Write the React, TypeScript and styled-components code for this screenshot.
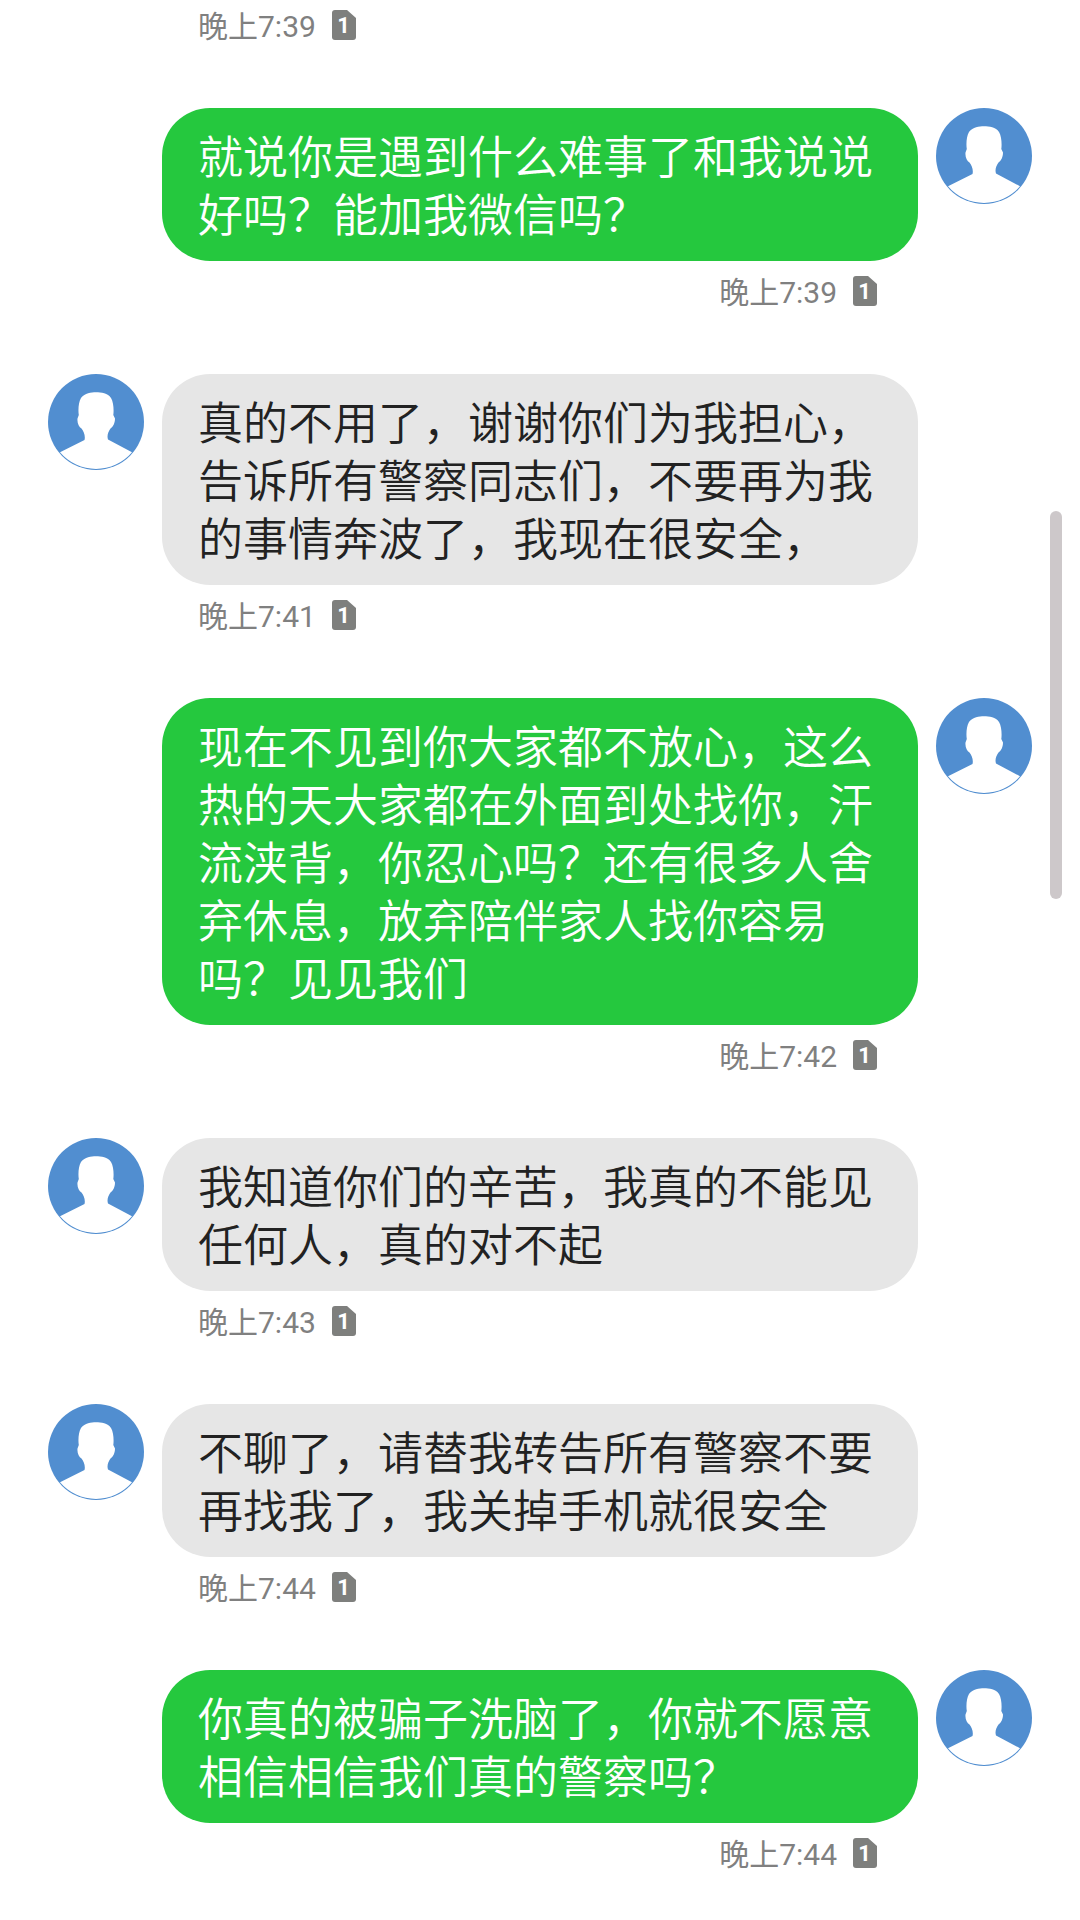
import React from 'react';
import styled, { createGlobalStyle } from 'styled-components';

const GlobalStyle = createGlobalStyle`
  html, body {
    margin: 0;
    padding: 0;
    background: #fff;
    overflow: hidden;
  }
  * {
    box-sizing: border-box;
  }
`;

const Page = styled.div`
  position: relative;
  width: 1080px;
  height: 1920px;
  overflow: hidden;
  padding-top: 7px;
  background: #fff;
  font-family: Roboto, 'Noto Sans CJK SC', sans-serif;
`;

const MessageList = styled.div`
  display: flex;
  flex-direction: column;
  gap: 65px;
`;

const Row = styled.div`
  display: grid;
  grid-template-columns: 96px 756px 96px;
  column-gap: 18px;
  padding: 0 48px;
`;

const AvatarSlot = styled.div<{ $outgoing: boolean }>`
  grid-column: ${(p) => (p.$outgoing ? 3 : 1)};
  grid-row: 1;
  width: 96px;
  height: 96px;
`;

const Body = styled.div`
  grid-column: 2;
  grid-row: 1;
  display: flex;
  flex-direction: column;
  gap: 12px;
`;

const Bubble = styled.div<{ $outgoing: boolean }>`
  padding: 18px 37px 19px 36px;
  border-radius: 48px;
  font-family: 'Noto Sans CJK SC DemiLight', 'Noto Sans CJK SC', sans-serif;
  font-size: 45px;
  line-height: 58px;
  font-weight: 400;
  color: ${(p) => (p.$outgoing ? '#fff' : '#222')};
  background: ${(p) => (p.$outgoing ? '#25c83e' : '#e6e6e6')};
`;

const Meta = styled.div<{ $outgoing: boolean }>`
  display: flex;
  align-items: center;
  justify-content: ${(p) => (p.$outgoing ? 'flex-end' : 'flex-start')};
  gap: 16px;
  height: 36px;
  padding: ${(p) => (p.$outgoing ? '0 41px 0 0' : '0 0 0 36px')};
  font-size: 30px;
  color: #808080;
`;

const MetaTime = styled.span`
  padding-bottom: 2px;
`;

const Scrollbar = styled.div`
  position: absolute;
  top: 511px;
  left: 1050px;
  width: 12px;
  height: 388px;
  border-radius: 6px;
  background: #cdc8ca;
`;

const Avatar = () => (
  <svg width="96" height="96" viewBox="0 0 96 96">
    <circle cx="48" cy="48" r="48" fill="#518ed0" />
    <path
      fill="#fff"
      d="M12 78.2 L36.5 66 C37.5 62 36 58 33.5 54.5 C31 53 29 49 29.5 44.5 L30.8 41 C30 36 30.5 28 33 24 C37 19 43 18.3 48 18.3 C53 18.3 60 19 63 24 C65.5 28 66 36 65.3 41 L67 44.5 C67 49 65 53 62.5 54.5 C60 58 58.8 62 60 65.5 L84 78.2 A47 47 0 0 1 12 78.2 Z"
    />
  </svg>
);

const ReadMark = () => (
  <svg width="24" height="30" viewBox="0 0 24 30">
    <path
      fill="#7e7f7d"
      d="M3 0 H15 L24 8 V27 Q24 30 21 30 H3 Q0 30 0 27 V3 Q0 0 3 0 Z"
    />
    <text
      x="11.5"
      y="23"
      fill="#fff"
      fontFamily="Roboto, sans-serif"
      fontSize="22"
      fontWeight="700"
      textAnchor="middle"
    >
      1
    </text>
  </svg>
);

interface ChatMessage {
  text: string;
  time: string;
  outgoing: boolean;
}

const messages: ChatMessage[] = [
  {
    text: '就说你是遇到什么难事了和我说说好吗？能加我微信吗？',
    time: '晚上7:39',
    outgoing: true,
  },
  {
    text: '真的不用了，谢谢你们为我担心，告诉所有警察同志们，不要再为我的事情奔波了，我现在很安全，',
    time: '晚上7:41',
    outgoing: false,
  },
  {
    text: '现在不见到你大家都不放心，这么热的天大家都在外面到处找你，汗流浃背，你忍心吗？还有很多人舍弃休息，放弃陪伴家人找你容易吗？见见我们',
    time: '晚上7:42',
    outgoing: true,
  },
  {
    text: '我知道你们的辛苦，我真的不能见任何人，真的对不起',
    time: '晚上7:43',
    outgoing: false,
  },
  {
    text: '不聊了，请替我转告所有警察不要再找我了，我关掉手机就很安全',
    time: '晚上7:44',
    outgoing: false,
  },
  {
    text: '你真的被骗子洗脑了，你就不愿意相信相信我们真的警察吗？',
    time: '晚上7:44',
    outgoing: true,
  },
];

const App: React.FC = () => (
  <Page>
    <GlobalStyle />
    <MessageList>
      <Row>
        <Body>
          <Meta $outgoing={false}>
            <MetaTime>晚上7:39</MetaTime>
            <ReadMark />
          </Meta>
        </Body>
      </Row>
      {messages.map((msg, i) => (
        <Row key={i}>
          <AvatarSlot $outgoing={msg.outgoing}>
            <Avatar />
          </AvatarSlot>
          <Body>
            <Bubble $outgoing={msg.outgoing}>{msg.text}</Bubble>
            <Meta $outgoing={msg.outgoing}>
              <MetaTime>{msg.time}</MetaTime>
              <ReadMark />
            </Meta>
          </Body>
        </Row>
      ))}
    </MessageList>
    <Scrollbar />
  </Page>
);

export default App;
